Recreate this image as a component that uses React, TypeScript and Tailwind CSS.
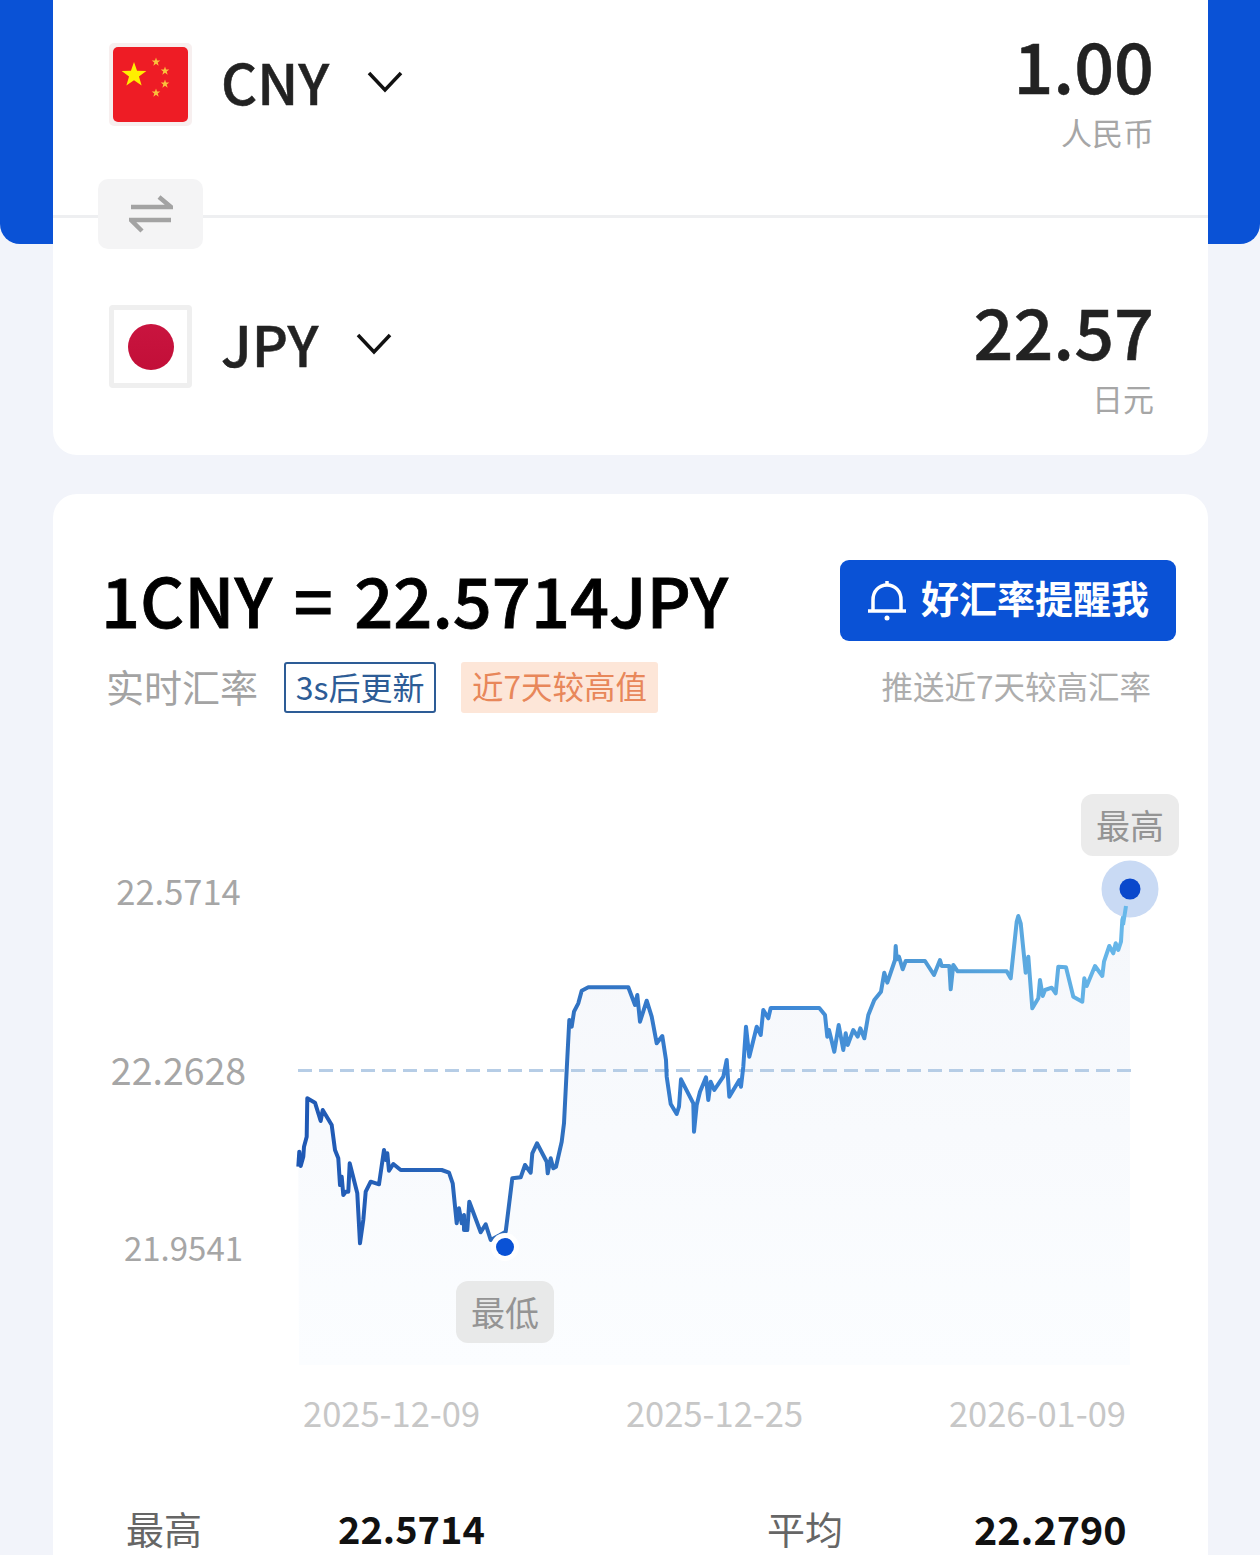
const font = "font-['Noto_Sans_CJK_SC','Noto_Sans',sans-serif]";

// traced from the chart, in page pixels x3 around two origins
const leftTrace = [[55,620],[58,575],[62,618],[70,590],[72,560],[80,530],[82,415],[105,428],[122,483],[128,450],[155,495],[165,570],[175,595],[180,675],[185,650],[190,705],[197,695],[205,695],[209,610],[232,700],[240,850],[250,780],[257,695],[272,665],[297,673],[312,570],[318,600],[322,580],[327,632],[340,612],[362,630],[485,630],[507,638],[518,670],[530,790],[537,745],[545,790],[552,765],[552,810],[562,810],[568,725],[602,817],[617,793],[632,840],[660,825],[677,815],[697,655],[722,652],[735,615],[752,638],[757,580],[771,550],[800,605],[803,640],[812,595],[820,625],[828,620],[845,545],[852,490],[860,330],[868,180],[875,200],[882,155],[895,130],[905,92],[925,82],[1045,82],[1065,135],[1072,105],[1080,185],[1100,122],[1115,170],[1130,250],[1147,228],[1158,300],[1160,350],[1172,432],[1190,462],[1197,440],[1203,358]];
const rightTrace = [[40,970],[42,1055],[50,975],[60,935],[78,892],[85,960],[92,905],[103,930],[130,890],[140,840],[148,950],[178,900],[183,920],[190,860],[198,740],[208,830],[230,740],[242,765],[250,690],[265,715],[272,684],[418,684],[435,705],[442,770],[447,750],[463,815],[476,735],[490,810],[497,760],[503,795],[520,750],[533,770],[541,745],[553,775],[565,705],[583,660],[603,635],[613,578],[622,608],[645,540],[647,498],[650,538],[657,530],[668,568],[677,543],[735,543],[762,585],[780,540],[785,558],[808,558],[812,628],[820,555],[833,574],[980,574],[992,595],[1010,425],[1015,408],[1022,430],[1037,578],[1045,530],[1057,685],[1075,655],[1080,600],[1088,648],[1095,630],[1115,623],[1127,640],[1135,560],[1158,562],[1180,650],[1207,665],[1213,595],[1220,618],[1245,558],[1267,588],[1272,545],[1288,498],[1300,520],[1307,490],[1315,510],[1323,485],[1327,420],[1338,378]];

const points = [
  ...leftTrace.map(([x, y]) => [280 + x / 3, 960 + y / 3]),
  ...rightTrace.map(([x, y]) => [680 + x / 3, 780 + y / 3]),
];
const linePoints = points.map(([x, y]) => `${x.toFixed(1)},${y.toFixed(1)}`).join(" ");
const areaPoints = `299,1365 ${linePoints} 1130,900 1130,1365`;

const star = (cx: number, cy: number, r: number) => {
  const out: string[] = [];
  for (let i = 0; i < 10; i++) {
    const rad = i % 2 === 0 ? r : r * 0.4;
    const a = -Math.PI / 2 + (i * Math.PI) / 5;
    out.push(`${(cx + rad * Math.cos(a)).toFixed(2)},${(cy + rad * Math.sin(a)).toFixed(2)}`);
  }
  return out.join(" ");
};

const Chevron = () => (
  <svg width="36" height="22" viewBox="0 0 36 22" fill="none" stroke="#111" strokeWidth="3.5" className="-mt-[6px]">
    <polyline points="2,2 18,19 34,2" />
  </svg>
);

const CnFlag = () => (
  <div className="h-[83px] w-[83px] rounded-[5px] bg-[#f7efef] p-[4px]">
    <svg width="75" height="75" viewBox="113 47 75 75" className="block">
      <rect x="113" y="47" width="75" height="75" rx="5" fill="#ee1c25" />
      <polygon points={star(134, 75, 13)} fill="#ffee00" />
      <polygon points={star(156, 62, 4.5)} fill="#f9c23c" />
      <polygon points={star(165, 71, 4.5)} fill="#f9c23c" />
      <polygon points={star(165, 84, 4.5)} fill="#f9c23c" />
      <polygon points={star(156, 93, 4.5)} fill="#f9c23c" />
    </svg>
  </div>
);

const JpFlag = () => (
  <div className="flex h-[83px] w-[83px] items-center justify-center rounded-[4px] border-[5px] border-[#efefef] bg-white">
    <div className="h-[46px] w-[46px] rounded-full bg-gradient-to-b from-[#c9143f] to-[#c20f38]" />
  </div>
);

const CurrencyRow = ({ flag, code, amount, name, top, amountTop }: { flag: React.ReactNode; code: string; amount: string; name: string; top: string; amountTop: string }) => (
  <div className={`flex h-[215px] items-start justify-between pl-[56px] pr-[54px] ${top}`}>
    <div className="flex items-center">
      {flag}
      <span className="-mt-[8px] ml-[29px] mr-[38px] text-[56px] leading-[80px] font-medium text-[#222] [-webkit-text-stroke:0.5px_#222]">{code}</span>
      <Chevron />
    </div>
    <div className="flex flex-col items-end">
      <span className={`text-[70px] leading-[72px] font-medium text-[#222] [-webkit-text-stroke:0.5px_#222] ${amountTop}`}>{amount}</span>
      <span className="mt-[11px] text-[31px] leading-[42px] text-[#a6a6a6]">{name}</span>
    </div>
  </div>
);

export default function App() {
  return (
    <div className={`relative h-[1555px] w-[1260px] overflow-hidden bg-[#f2f4fa] ${font}`}>
      <div className="absolute inset-x-0 top-0 h-[244px] rounded-b-[20px] bg-[#0a52d6]" />

      <div className="relative ml-[53px] mr-[52px] h-[455px] rounded-b-[24px] bg-white">
        <CurrencyRow flag={<CnFlag />} code="CNY" amount="1.00" name="人民币" top="pt-[43px]" amountTop="-mt-[15px]" />
        <div className="relative h-[3px] bg-[#eeeff1]">
          <div className="absolute left-[45px] top-[-36px] flex h-[70px] w-[105px] items-center justify-center rounded-[10px] bg-[#f4f4f5]">
            <svg width="44" height="38" viewBox="129 195 44 38" fill="none" stroke="#a3a3a3" strokeWidth="4.5">
              <path d="M131 207H171L159 197" />
              <path d="M171 220H131L142 231" />
            </svg>
          </div>
        </div>
        <CurrencyRow flag={<JpFlag />} code="JPY" amount="22.57" name="日元" top="pt-[87px]" amountTop="-mt-[11px]" />
      </div>

      <div className="relative ml-[53px] mr-[52px] mt-[39px] h-[1100px] rounded-t-[24px] bg-white">
        <div className="flex items-start justify-between pl-[48px] pr-[32px] pt-[66px]">
          <span className="mt-[-6px] text-[68.5px] leading-[90px] font-medium text-black [word-spacing:6px] [-webkit-text-stroke:0.8px_black]">1CNY = 22.5714JPY</span>
          <button className="flex h-[81px] w-[336px] items-center rounded-[9px] bg-[#0a52d6] pl-[27px] text-[38px] font-bold text-white">
            <svg width="40" height="42" viewBox="0 0 40 42" fill="none" stroke="white" strokeWidth="3.5" className="mr-[14px]">
              <path d="M1 31H39M6 31V20C6 11 12 5 20 5S34 11 34 20V31" />
              <path d="M20 1V5" />
              <circle cx="20" cy="38" r="2.5" fill="white" stroke="none" />
            </svg>
            <span className="-mt-[8px]">好汇率提醒我</span>
          </button>
        </div>

        <div className="mt-[18px] flex items-center pl-[53px] pr-[57px]">
          <span className="-mt-[4px] text-[38px] leading-[51px] text-[#a3a3a3]">实时汇率</span>
          <span className="ml-[26px] flex h-[51px] w-[152px] items-center justify-center rounded-[3px] border-[2.5px] border-[#2d5c96] pb-[4px] text-[32px] text-[#2d5c96]">3s后更新</span>
          <span className="ml-[25px] flex h-[51px] w-[197px] items-center justify-center rounded-[3px] bg-[#fde6d8] pb-[4px] text-[31.5px] text-[#e8875a]">近7天较高值</span>
          <span className="ml-auto -mt-[4px] text-[31.5px] text-[#adadad]">推送近7天较高汇率</span>
        </div>

        <div className="relative mt-[67px] flex h-[600px]">
          <div className="flex w-[237px] flex-col items-center gap-[138.5px] pl-[14px] pt-[90px] leading-[40px] text-[#a6a6a6]">
            <span className="text-[34.5px]">22.5714</span>
            <span className="text-[37.5px]">22.2628</span>
            <span className="ml-[10px] text-[33px]">21.9541</span>
          </div>
          <svg width="917" height="600" viewBox="290 780 917 600" fill="none">
            <defs>
              <linearGradient id="stroke" gradientUnits="userSpaceOnUse" x1="299" y1="0" x2="1130" y2="0">
                <stop offset="0" stopColor="#1f58b4" />
                <stop offset="0.3" stopColor="#2f6fbe" />
                <stop offset="0.55" stopColor="#3a84d6" />
                <stop offset="0.75" stopColor="#4f9ad6" />
                <stop offset="1" stopColor="#68b8ea" />
              </linearGradient>
              <linearGradient id="area" x1="0" y1="0" x2="0" y2="1">
                <stop offset="0" stopColor="#f5f7fb" />
                <stop offset="1" stopColor="#fbfdff" />
              </linearGradient>
            </defs>
            <polygon points={areaPoints} fill="url(#area)" />
            <line x1="298" y1="1070.5" x2="1132" y2="1070.5" stroke="#b6cde6" strokeWidth="3" strokeDasharray="14 7" />
            <polyline points={linePoints} stroke="url(#stroke)" strokeWidth="4" strokeLinejoin="round" />
            <circle cx="505" cy="1247" r="14" fill="white" />
            <circle cx="505" cy="1247" r="9" fill="#0a52d6" />
            <circle cx="1130" cy="889" r="28.5" fill="#c9daf4" />
            <polyline points="1123,925 1126,906" stroke="#68b8ea" strokeWidth="4" />
            <circle cx="1130" cy="889" r="10.5" fill="#0a48cc" />
          </svg>
          <span className="absolute left-[1028px] top-[14px] flex h-[62px] w-[98px] items-center justify-center rounded-[12px] bg-[#ebebeb] pb-[2px] text-[34px] text-[#949494]">最高</span>
          <span className="absolute left-[403px] top-[501px] flex h-[62px] w-[98px] items-center justify-center rounded-[12px] bg-[#e8e9e9] pb-[2px] text-[34px] text-[#949494]">最低</span>
        </div>

        <div className="mt-[8px] flex justify-between pl-[250px] pr-[82px] text-[34.5px] leading-[48px] text-[#c7c7c7]">
          <span>2025-12-09</span>
          <span>2025-12-25</span>
          <span>2026-01-09</span>
        </div>

        <div className="relative mt-[68px] flex items-center text-[38px] leading-[48px]">
          <span className="ml-[73px] w-[212px] text-[#666]">最高</span>
          <span className="w-[429px] font-bold text-[#111]">22.5714</span>
          <span className="w-[207px] text-[#666]">平均</span>
          <span className="text-[39.5px] font-bold text-[#111]">22.2790</span>
        </div>
      </div>
    </div>
  );
}
